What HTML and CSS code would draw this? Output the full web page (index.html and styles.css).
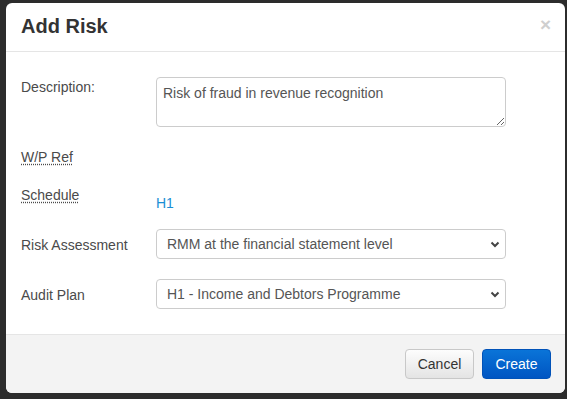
FILE: index.html
```html
<!DOCTYPE html>
<html lang="en">
<head>
  <meta charset="UTF-8" />
  <meta name="viewport" content="width=device-width, initial-scale=1.0" />
  <title>Add Risk</title>
  <link rel="stylesheet" href="styles.css">
</head>
<body>
  <div class="modal">
    <div class="modal-header">
      <span class="close">&times;</span>
      <h4 class="modal-title">Add Risk</h4>
    </div>
    <div class="modal-body">
      <div class="form-row row-desc">
        <label class="control-label">Description:</label>
        <textarea class="form-control">Risk of fraud in revenue recognition</textarea>
      </div>
      <div class="form-row row-ref">
        <label class="control-label"><abbr title="Working paper reference">W/P Ref</abbr></label>
        <div></div>
      </div>
      <div class="form-row row-schedule">
        <label class="control-label"><abbr title="Lead schedule">Schedule</abbr></label>
        <a class="static-link" href="#">H1</a>
      </div>
      <div class="form-row row-select">
        <label class="control-label">Risk Assessment</label>
        <div class="select-wrap">
          <select class="form-control">
            <option>RMM at the financial statement level</option>
          </select>
          <svg class="chevron" width="10" height="7" viewBox="0 0 10 7"><path d="M1.5 1.5 L5 5 L8.5 1.5" fill="none" stroke="#444" stroke-width="2"/></svg>
        </div>
      </div>
      <div class="form-row row-select last">
        <label class="control-label">Audit Plan</label>
        <div class="select-wrap">
          <select class="form-control">
            <option>H1 - Income and Debtors Programme</option>
          </select>
          <svg class="chevron" width="10" height="7" viewBox="0 0 10 7"><path d="M1.5 1.5 L5 5 L8.5 1.5" fill="none" stroke="#444" stroke-width="2"/></svg>
        </div>
      </div>
    </div>
    <div class="modal-footer">
      <button class="btn btn-default">Cancel</button>
      <button class="btn btn-primary">Create</button>
    </div>
  </div>
</body>
</html>
```

FILE: styles.css
```css
body {
  font-family: 'Liberation Sans', Arial, sans-serif;
  font-size: 14px;
  line-height: 20px;
  color: #4a4a4a;
  margin: 0;
  background-color: #2c2c2c;
  height: 399px;
  overflow: hidden;
}
.modal {
  margin: 3px 0 0 6px;
  width: 559px;
  height: 390px;
  background: #fff;
  border-radius: 6px;
  overflow: hidden;
  display: flex;
  flex-direction: column;
}
.modal-header {
  padding: 12px 15px 14px 15px;
  border-bottom: 1px solid #e5e5e5;
}
.modal-title {
  margin: 0;
  font-size: 20px;
  line-height: 22px;
  font-weight: bold;
  color: #333;
}
.close {
  float: right;
  font-size: 19px;
  font-weight: bold;
  line-height: 22px;
  color: #cfcfcf;
  margin-right: -1px;
  margin-top: -1px;
  cursor: pointer;
}
.modal-body {
  padding: 25px 0 25px 15px;
  flex: 1;
}
.form-row {
  display: grid;
  grid-template-columns: 135px 350px;
  margin-bottom: 20px;
}
.form-row.last {
  margin-bottom: 0;
}
.control-label {
  display: block;
  color: #4a4a4a;
}
.row-ref {
  margin-bottom: 18px;
}
.row-schedule {
  margin-bottom: 16px;
}
abbr {
  text-decoration: underline dotted;
  text-underline-offset: 2px;
}
.static-link {
  padding-top: 8px;
  color: #1b8fd5;
  text-decoration: none;
}
.form-control {
  box-sizing: border-box;
  width: 350px;
  border: 1px solid #ccc;
  border-radius: 4px;
  font-family: 'Liberation Sans', Arial, sans-serif;
  font-size: 14px;
  color: #555;
  background: #fff;
}
textarea.form-control {
  height: 50px;
  padding: 5px 6px;
  line-height: 20px;
  resize: vertical;
}
.row-select .control-label {
  padding-top: 6px;
}
.select-wrap {
  position: relative;
}
select.form-control {
  height: 30px;
  padding: 0 10px;
  appearance: none;
  -webkit-appearance: none;
}
.chevron {
  position: absolute;
  right: 6px;
  top: 12px;
}
.modal-footer {
  border-top: 1px solid #e5e5e5;
  background: #f3f3f3;
  padding: 14px 14px 14px 0;
  display: flex;
  justify-content: flex-end;
  gap: 8px;
}
.btn {
  height: 30px;
  width: 69px;
  border-radius: 4px;
  font-family: 'Liberation Sans', Arial, sans-serif;
  font-size: 14px;
  cursor: pointer;
}
.btn-default {
  color: #333;
  border: 1px solid #c8c8c8;
  background: linear-gradient(#fdfdfd, #e4e4e4);
}
.btn-primary {
  color: #fff;
  border: 1px solid #0152b8;
  background: linear-gradient(#0a74d8, #0055c2);
}
```
